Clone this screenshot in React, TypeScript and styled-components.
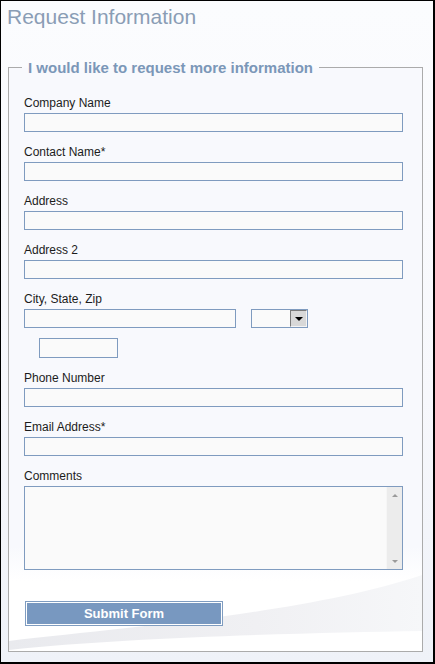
import React from "react";
import styled, { createGlobalStyle } from "styled-components";

const GlobalStyle = createGlobalStyle`
  html, body { margin: 0; padding: 0; background: #ffffff; }
  body { font-family: "Liberation Sans", Arial, sans-serif; }
  * { box-sizing: border-box; }
`;

const Frame = styled.div`
  width: 435px;
  height: 664px;
  border-style: solid;
  border-color: #000;
  border-width: 1px 2px 2px 1px;
  background: linear-gradient(to bottom, #fbfcfe 0%, #f7f8fc 60%, #eff2f8 100%);
  padding: 4px 0 0 0;
  display: flex;
  flex-direction: column;
`;

const Title = styled.h1`
  margin: 0 0 0 6px;
  font-family: "Liberation Sans", Arial, sans-serif;
  font-size: 21px;
  line-height: 24px;
  font-weight: normal;
  color: #8a9db5;
`;

const Fieldset = styled.fieldset`
  position: relative;
  margin: 30px 0 0 7px;
  width: 415px;
  border: 1px solid #ababab;
  padding: 19px 18px 25px 15px;
  background: linear-gradient(to bottom, #f8f9fd 0%, #f8f9fd 82%, #ffffff 88%, #ffffff 100%);
  min-inline-size: 0;
`;

const Legend = styled.legend`
  margin-left: -2px;
  padding: 0 6px;
  font-size: 15px;
  line-height: 17px;
  font-weight: bold;
  color: #7b97b8;
`;

const Swoosh = styled.svg`
  position: absolute;
  left: 0;
  bottom: 0;
  width: 413px;
  height: 92px;
  pointer-events: none;
`;

const FormBody = styled.div`
  position: relative;
  display: flex;
  flex-direction: column;
`;

const Group = styled.div<{ $gap?: number }>`
  display: flex;
  flex-direction: column;
  margin-bottom: ${(p) => (p.$gap ?? 12)}px;
`;

const Label = styled.label`
  display: block;
  font-size: 12px;
  line-height: 14px;
  color: #1c1c1c;
  padding-top: 1px;
  margin-bottom: 3px;
`;

const TextInput = styled.input<{ $w?: number }>`
  display: block;
  width: ${(p) => (p.$w ? `${p.$w}px` : "379px")};
  height: 19px;
  border: 1px solid #7f9bbf;
  background: #fafafa;
  padding: 0 3px;
  font-family: "Liberation Sans", Arial, sans-serif;
  font-size: 12px;
  outline: none;
`;

const Row = styled.div`
  display: flex;
  align-items: center;
  gap: 15px;
`;

const ZipRow = styled.div`
  margin-top: 10px;
  padding-left: 15px;
`;

const SelectBox = styled.div`
  display: flex;
  width: 57px;
  height: 19px;
  border: 1px solid #7f9bbf;
  background: #fafafa;
`;

const SelectField = styled.select`
  flex: 1;
  min-width: 0;
  appearance: none;
  border: none;
  background: transparent;
  outline: none;
  font-family: "Liberation Sans", Arial, sans-serif;
  font-size: 12px;
`;

const ArrowBtn = styled.div`
  width: 17px;
  height: 17px;
  display: flex;
  align-items: center;
  justify-content: center;
  background: #d8d8d8;
  border-left: 1px solid #7a7a7a;
  border-top: 1px solid #7a7a7a;
  border-right: 1px solid #f4f4f4;
  border-bottom: 1px solid #f4f4f4;
`;

const DownTri = styled.span<{ $c?: string; $w?: number }>`
  width: 0;
  height: 0;
  border-left: ${(p) => p.$w ?? 4}px solid transparent;
  border-right: ${(p) => p.$w ?? 4}px solid transparent;
  border-top: ${(p) => Math.ceil((p.$w ?? 4) * 0.9)}px solid ${(p) => p.$c ?? "#000"};
`;

const UpTri = styled.span<{ $c?: string; $w?: number }>`
  width: 0;
  height: 0;
  border-left: ${(p) => p.$w ?? 4}px solid transparent;
  border-right: ${(p) => p.$w ?? 4}px solid transparent;
  border-bottom: ${(p) => Math.ceil((p.$w ?? 4) * 0.9)}px solid ${(p) => p.$c ?? "#000"};
`;

const AreaBox = styled.div`
  display: flex;
  width: 379px;
  height: 84px;
  border: 1px solid #7f9bbf;
  background: #fafafa;
`;

const Area = styled.textarea`
  flex: 1;
  border: none;
  background: transparent;
  resize: none;
  outline: none;
  overflow: hidden;
  font-family: "Liberation Sans", Arial, sans-serif;
  font-size: 12px;
`;

const ScrollTrack = styled.div`
  width: 16px;
  display: flex;
  flex-direction: column;
  justify-content: space-between;
  align-items: center;
  padding: 7px 0 6px;
  background: #ececec;
  border-left: 1px solid #f6f6f6;
`;

const SubmitRow = styled.div`
  margin-top: 31px;
  padding-left: 1px;
`;

const SubmitButton = styled.button`
  display: block;
  width: 198px;
  height: 25px;
  border: 1px solid #7f9cc0;
  box-shadow: inset 0 0 0 1px #ffffff;
  background: #7898c0;
  color: #ffffff;
  font-family: "Liberation Sans", Arial, sans-serif;
  font-size: 13px;
  font-weight: bold;
  padding: 0;
  cursor: pointer;
`;

type FieldProps = { label: string };
const Field: React.FC<FieldProps> = ({ label }) => (
  <Group>
    <Label>{label}</Label>
    <TextInput type="text" />
  </Group>
);

export default function App() {
  return (
    <>
      <GlobalStyle />
      <Frame>
        <Title>Request Information</Title>
        <Fieldset>
          <Legend>I would like to request more information</Legend>
          <Swoosh viewBox="0 0 413 92" preserveAspectRatio="none">
            <defs>
              <linearGradient id="sw" x1="0" y1="0" x2="1" y2="0">
                <stop offset="0" stopColor="#e9eaee" />
                <stop offset="0.6" stopColor="#f0f0f3" />
                <stop offset="1" stopColor="#f6f7f9" />
              </linearGradient>
            </defs>
            <path
              d="M0,82 C120,68 300,54 413,16 L413,72 C300,74 120,78 0,91 Z"
              fill="url(#sw)"
            />
          </Swoosh>
          <FormBody>
            <Field label="Company Name" />
            <Field label="Contact Name*" />
            <Field label="Address" />
            <Field label="Address 2" />
            <Group>
              <Label>City, State, Zip</Label>
              <Row>
                <TextInput type="text" $w={212} />
                <SelectBox>
                  <SelectField defaultValue="">
                    <option value=""></option>
                  </SelectField>
                  <ArrowBtn>
                    <DownTri $w={4} />
                  </ArrowBtn>
                </SelectBox>
              </Row>
              <ZipRow>
                <TextInput type="text" $w={79} style={{ height: 20 }} />
              </ZipRow>
            </Group>
            <Field label="Phone Number" />
            <Field label="Email Address*" />
            <Group $gap={0}>
              <Label>Comments</Label>
              <AreaBox>
                <Area />
                <ScrollTrack>
                  <UpTri $c="#9a9a9a" $w={3} />
                  <DownTri $c="#9a9a9a" $w={3} />
                </ScrollTrack>
              </AreaBox>
            </Group>
            <SubmitRow>
              <SubmitButton type="button">Submit Form</SubmitButton>
            </SubmitRow>
          </FormBody>
        </Fieldset>
      </Frame>
    </>
  );
}
